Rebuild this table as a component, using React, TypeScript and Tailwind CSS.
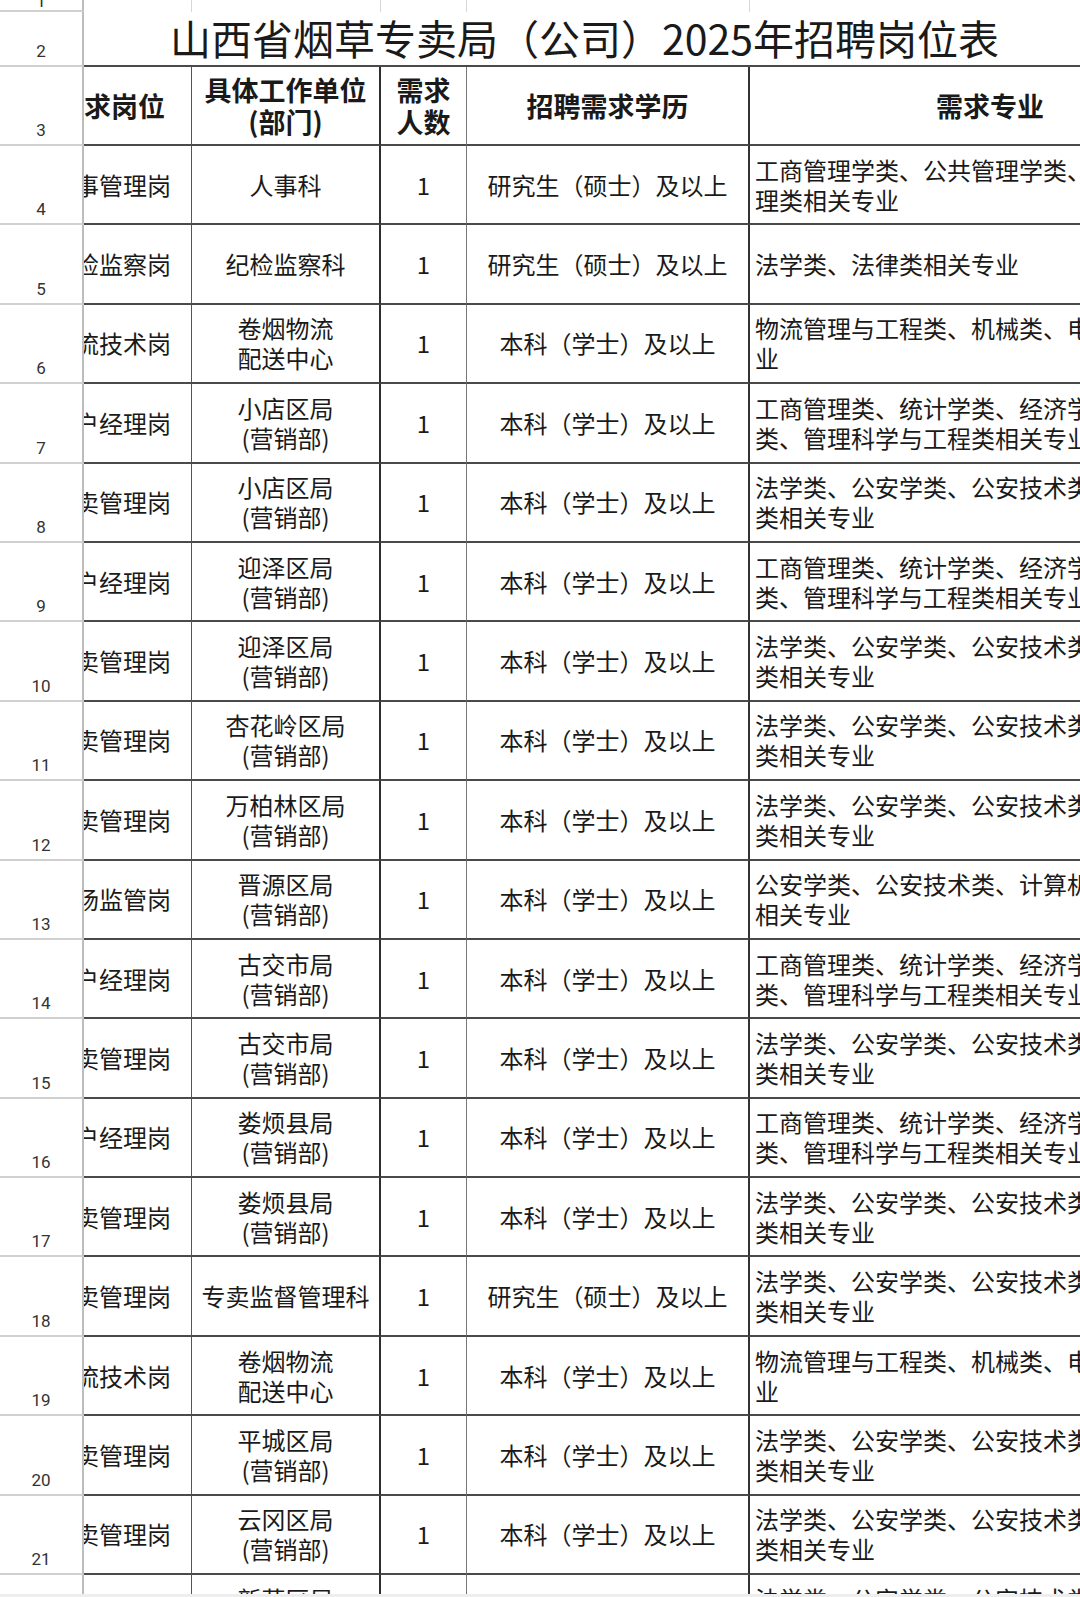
import React from 'react';

type Row = {
  n: number;
  pos: string;
  unit: string[];
  edu: string;
  major: string[];
};

const LAW = ['法学类、公安学类、公安技术类、计算机', '类相关专业'];
const BIZ = ['工商管理类、统计学类、经济学类、金融学', '类、管理科学与工程类相关专业'];
const LOG = ['物流管理与工程类、机械类、电气类相关专', '业'];
const MASTER = '研究生（硕士）及以上';
const BACHELOR = '本科（学士）及以上';

const rows: Row[] = [
  { n: 4, pos: '人事管理岗', unit: ['人事科'], edu: MASTER, major: ['工商管理学类、公共管理学类、图书档案管', '理类相关专业'] },
  { n: 5, pos: '纪检监察岗', unit: ['纪检监察科'], edu: MASTER, major: ['法学类、法律类相关专业'] },
  { n: 6, pos: '物流技术岗', unit: ['卷烟物流', '配送中心'], edu: BACHELOR, major: LOG },
  { n: 7, pos: '客户经理岗', unit: ['小店区局', '(营销部)'], edu: BACHELOR, major: BIZ },
  { n: 8, pos: '专卖管理岗', unit: ['小店区局', '(营销部)'], edu: BACHELOR, major: LAW },
  { n: 9, pos: '客户经理岗', unit: ['迎泽区局', '(营销部)'], edu: BACHELOR, major: BIZ },
  { n: 10, pos: '专卖管理岗', unit: ['迎泽区局', '(营销部)'], edu: BACHELOR, major: LAW },
  { n: 11, pos: '专卖管理岗', unit: ['杏花岭区局', '(营销部)'], edu: BACHELOR, major: LAW },
  { n: 12, pos: '专卖管理岗', unit: ['万柏林区局', '(营销部)'], edu: BACHELOR, major: LAW },
  { n: 13, pos: '市场监管岗', unit: ['晋源区局', '(营销部)'], edu: BACHELOR, major: ['公安学类、公安技术类、计算机类、法学类', '相关专业'] },
  { n: 14, pos: '客户经理岗', unit: ['古交市局', '(营销部)'], edu: BACHELOR, major: BIZ },
  { n: 15, pos: '专卖管理岗', unit: ['古交市局', '(营销部)'], edu: BACHELOR, major: LAW },
  { n: 16, pos: '客户经理岗', unit: ['娄烦县局', '(营销部)'], edu: BACHELOR, major: BIZ },
  { n: 17, pos: '专卖管理岗', unit: ['娄烦县局', '(营销部)'], edu: BACHELOR, major: LAW },
  { n: 18, pos: '专卖管理岗', unit: ['专卖监督管理科'], edu: MASTER, major: LAW },
  { n: 19, pos: '物流技术岗', unit: ['卷烟物流', '配送中心'], edu: BACHELOR, major: LOG },
  { n: 20, pos: '专卖管理岗', unit: ['平城区局', '(营销部)'], edu: BACHELOR, major: LAW },
  { n: 21, pos: '专卖管理岗', unit: ['云冈区局', '(营销部)'], edu: BACHELOR, major: LAW },
  { n: 22, pos: '专卖管理岗', unit: ['新荣区局', '(营销部)'], edu: BACHELOR, major: LAW },
];

const grid = 'grid grid-cols-[84px_108px_189px_86px_283px_480px] w-[1230px]';

function RowHead({ n, className = '' }: { n: number; className?: string }) {
  return (
    <div
      className={`flex items-end justify-center overflow-hidden bg-white border-r-2 border-r-[#bdbdbd] border-b-2 border-b-[#d0d0d0] pb-[5px] font-['Roboto',sans-serif] font-normal text-[17px] leading-none text-[#333] ${className}`}
    >
      {n}
    </div>
  );
}

function DataRow({ r }: { r: Row }) {
  const cell = 'flex border-b-2 border-b-[#4a4a4a] text-[24px] leading-[30px] text-[#1a1a1a]';
  return (
    <div className={`${grid} h-[79.4px]`}>
      <RowHead n={r.n} />
      <div className={`${cell} overflow-hidden items-center border-r border-r-[#555]`}>
        <div className="w-[162px] -ml-[54px] shrink-0 text-center whitespace-nowrap">{r.pos}</div>
      </div>
      <div className={`${cell} flex-col items-center justify-center border-r-2 border-r-[#2e2e2e]`}>
        {r.unit.map((u) => (
          <div key={u} className="whitespace-nowrap">{u}</div>
        ))}
      </div>
      <div className={`${cell} items-center justify-center border-r border-r-[#777]`}>1</div>
      <div className={`${cell} items-center justify-center border-r-2 border-r-[#333]`}>
        <span className="whitespace-nowrap">{r.edu}</span>
      </div>
      <div className={`${cell} flex-col justify-center pl-[5px]`}>
        {r.major.map((m) => (
          <div key={m} className="whitespace-nowrap">{m}</div>
        ))}
      </div>
    </div>
  );
}

export default function App() {
  return (
    <div className="w-[1080px] h-[1597px] bg-[#eeeeee] overflow-hidden font-['Noto_Sans_CJK_SC','Noto_Sans',sans-serif]">
      <div className="h-[1594px] overflow-hidden bg-white">
        {/* row 1 – mostly scrolled away */}
        <div className={`${grid} h-[12px]`}>
          <div className="flex items-end justify-center overflow-hidden bg-white border-r-2 border-r-[#bdbdbd] border-b-2 border-b-[#d0d0d0] font-['Roboto',sans-serif] text-[17px] leading-none text-[#333]">
            <span>1</span>
          </div>
          <div className="border-r border-r-[#d6d6d6]" />
          <div className="border-r border-r-[#d6d6d6]" />
          <div className="border-r border-r-[#d6d6d6]" />
          <div className="border-r border-r-[#d6d6d6]" />
          <div />
        </div>

        {/* row 2 – title */}
        <div className={`${grid} h-[55px]`}>
          <RowHead n={2} />
          <div className="col-span-5 flex items-center pl-[86px] pb-[2px] border-b-2 border-b-[#4a4a4a] text-[41px] leading-none text-[#1a1a1a] whitespace-nowrap">
            山西省烟草专卖局（公司）2025年招聘岗位表
          </div>
        </div>

        {/* row 3 – header */}
        <div className={`${grid} h-[79px] text-[27px] leading-[32px] text-[#1a1a1a]`}>
          <RowHead n={3} />
          <div className="flex items-center overflow-hidden font-bold border-b-2 border-b-[#4a4a4a] border-r border-r-[#555]">
            <div className="w-[162px] -ml-[54px] shrink-0 text-center whitespace-nowrap">需求岗位</div>
          </div>
          <div className="flex flex-col items-center justify-center font-bold border-b-2 border-b-[#4a4a4a] border-r-2 border-r-[#2e2e2e]">
            <div>具体工作单位</div>
            <div>(部门)</div>
          </div>
          <div className="flex flex-col items-center justify-center font-bold border-b-2 border-b-[#4a4a4a] border-r border-r-[#777]">
            <div>需求</div>
            <div>人数</div>
          </div>
          <div className="flex items-center justify-center font-bold border-b-2 border-b-[#4a4a4a] border-r-2 border-r-[#333]">
            招聘需求学历
          </div>
          <div className="flex items-center justify-center font-bold border-b-2 border-b-[#4a4a4a]">需求专业</div>
        </div>

        {rows.map((r) => (
          <DataRow key={r.n} r={r} />
        ))}
      </div>
    </div>
  );
}
